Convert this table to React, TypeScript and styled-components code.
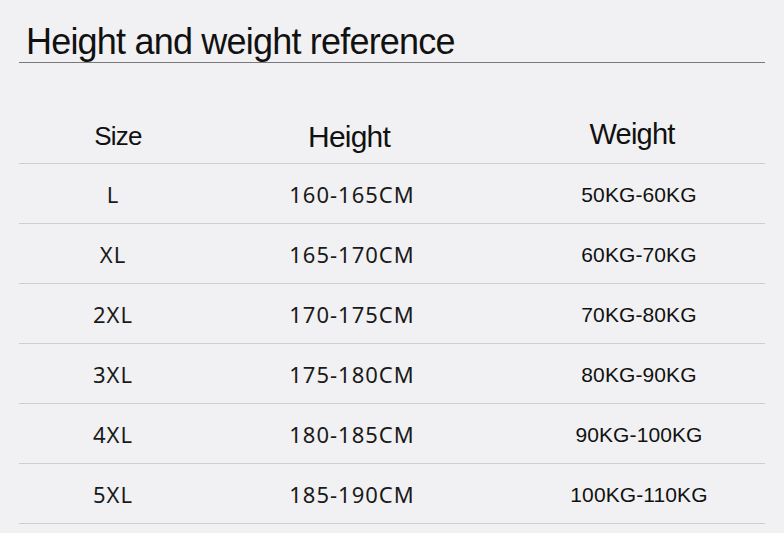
import { createGlobalStyle, styled } from 'styled-components'

const GlobalStyle = createGlobalStyle`
  html, body {
    margin: 0;
    padding: 0;
    background: #f1f1f3;
  }
`

const Page = styled.div`
  width: 784px;
  height: 533px;
  background: #f1f1f3;
  padding: 0 19px;
  box-sizing: border-box;
  overflow: hidden;
`

const Title = styled.h1`
  margin: 0;
  padding: 22px 0 0 7px;
  height: 63px;
  box-sizing: border-box;
  border-bottom: 1px solid #7a7a7c;
  font-family: 'Liberation Sans', Arial, sans-serif;
  font-weight: 400;
  font-size: 36px;
  line-height: 40px;
  letter-spacing: -0.8px;
  color: #111;
`

const Table = styled.div`
  margin-top: 47px;
`

const Row = styled.div<{ $head?: boolean }>`
  display: grid;
  grid-template-columns: 188px 290px 1fr;
  align-items: center;
  height: ${p => (p.$head ? '54px' : '60px')};
  border-bottom: 1px solid #cfcfd1;
  box-sizing: border-box;
`

const HeadCell = styled.div<{ $size: number; $shift: number; $lift?: number }>`
  text-align: center;
  font-family: 'Liberation Sans', Arial, sans-serif;
  font-size: ${p => p.$size}px;
  letter-spacing: -0.8px;
  color: #111;
  margin-left: ${p => p.$shift}px;
  margin-top: ${p => -(p.$lift ?? 0)}px;
`

const Cell = styled.div`
  text-align: center;
  font-family: 'Noto Sans', Roboto, sans-serif;
  font-size: 22px;
  letter-spacing: 1px;
  color: #1a1a1a;
`

const WeightCell = styled.div`
  text-align: center;
  padding-left: 16px;
  padding-top: 2px;
  font-family: 'Liberation Sans', Arial, sans-serif;
  font-size: 21px;
  letter-spacing: 0.1px;
  color: #111;
`

const rows = [
  ['L', '160-165CM', '50KG-60KG'],
  ['XL', '165-170CM', '60KG-70KG'],
  ['2XL', '170-175CM', '70KG-80KG'],
  ['3XL', '175-180CM', '80KG-90KG'],
  ['4XL', '180-185CM', '90KG-100KG'],
  ['5XL', '185-190CM', '100KG-110KG'],
]

export default function App() {
  return (
    <Page>
      <GlobalStyle />
      <Title>Height and weight reference</Title>
      <Table>
        <Row $head>
          <HeadCell $size={26} $shift={10}>Size</HeadCell>
          <HeadCell $size={30} $shift={-6}>Height</HeadCell>
          <HeadCell $size={29} $shift={2} $lift={4}>Weight</HeadCell>
        </Row>
        {rows.map(([size, height, weight]) => (
          <Row key={size}>
            <Cell>{size}</Cell>
            <Cell>{height}</Cell>
            <WeightCell>{weight}</WeightCell>
          </Row>
        ))}
      </Table>
    </Page>
  )
}
